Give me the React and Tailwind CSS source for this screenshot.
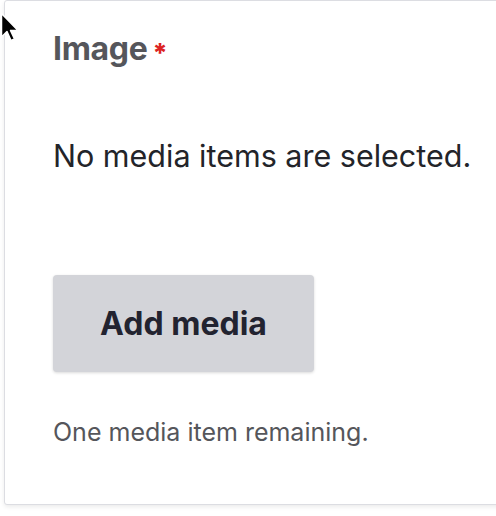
import React from 'react';

function Cursor() {
  return (
    <svg className="absolute left-0 top-[12px]" width="20" height="32" viewBox="0 0 20 32">
      <path
        d="M1.5 1.5 L1.5 25 L7 19.5 L11 28.5 L14.5 27 L10.5 18.5 L18 18.5 Z"
        fill="#000"
        stroke="#fff"
        strokeWidth="1.5"
        strokeLinejoin="round"
      />
    </svg>
  );
}

export default function App() {
  return (
    <div className="relative w-[496px] h-[516px] overflow-hidden bg-white" style={{ fontFamily: 'Inter, "Noto Sans", sans-serif' }}>
      <div className="ml-[4px] w-[540px] border border-[#dcdde2] rounded-[3px] bg-white shadow-[0_2px_4px_rgba(0,0,0,0.08)] pl-[48px] pt-[28px] pb-[56px]">
        <div className="flex items-start text-[32px] leading-[40px] font-bold text-[#55565b] tracking-[-0.3px]">
          <span>Image</span>
          <span className="ml-[5px] mt-[8px] text-[26px] leading-[32px] font-extrabold text-[#dc2323]">*</span>
        </div>
        <p className="mt-[69px] text-[30.5px] leading-[36px] text-[#232429]">No media items are selected.</p>
        <button className="mt-[101px] w-[261px] h-[97px] rounded-[4px] bg-[#d3d4d9] shadow-[0_1px_3px_rgba(0,0,0,0.15)] text-[32px] font-bold text-[#222330]">
          Add media
        </button>
        <p className="mt-[44px] text-[25px] leading-[32px] text-[#55565b]">One media item remaining.</p>
      </div>
      <Cursor />
    </div>
  );
}
